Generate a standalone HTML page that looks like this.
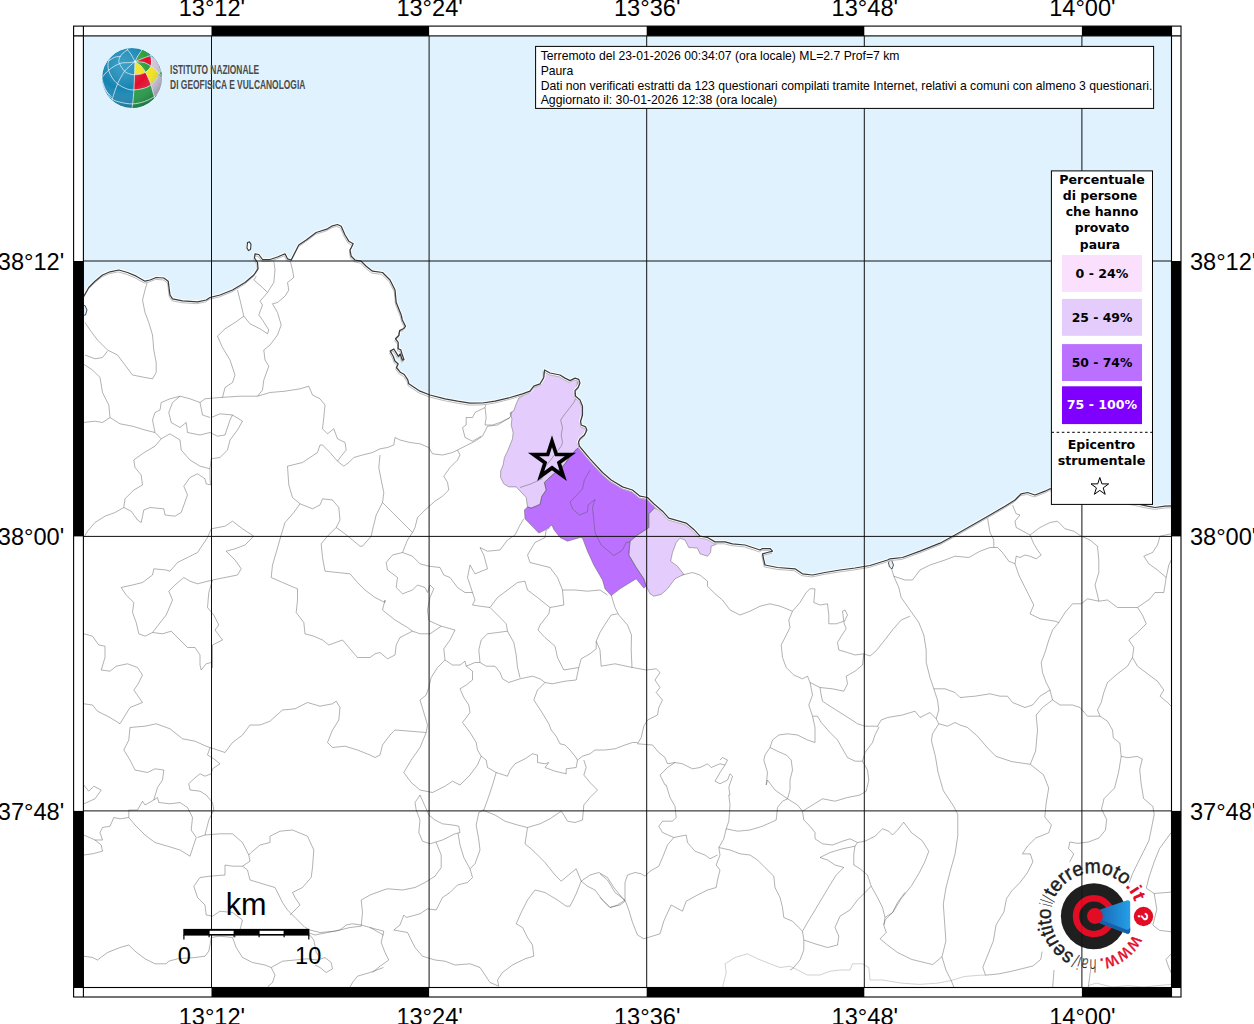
<!DOCTYPE html>
<html lang="it"><head><meta charset="utf-8"><title>Hai sentito il terremoto - Paura</title>
<style>html,body{margin:0;padding:0;background:#fff}svg{display:block}.t{font-family:"Liberation Sans",sans-serif}.d{font-family:"DejaVu Sans","Liberation Sans",sans-serif;font-weight:bold}</style></head><body>
<svg width="1254" height="1024" viewBox="0 0 1254 1024">
<defs><clipPath id="mapclip"><rect x="83.4" y="35.9" width="1088.1" height="951.6"/></clipPath>
<linearGradient id="cone" x1="0" y1="0" x2="1" y2="0"><stop offset="0" stop-color="#0b5fae"/><stop offset="1" stop-color="#1a9be6"/></linearGradient>
<radialGradient id="globeb" cx="0.35" cy="0.3" r="0.8"><stop offset="0" stop-color="#3fb4d6"/><stop offset="0.6" stop-color="#1581ad"/><stop offset="1" stop-color="#0d5f86"/></radialGradient>
</defs>
<rect width="1254" height="1024" fill="#fff"/>
<g clip-path="url(#mapclip)">
<rect x="83.4" y="35.9" width="1088.1" height="951.6" fill="#dff2fd"/>
<path d="M70.0 300.0 L83.8 296.2 L88.8 287.5 L95.0 281.2 L102.5 275.0 L110.0 271.8 L118.8 270.0 L127.5 272.5 L136.2 276.2 L145.0 281.2 L150.0 280.0 L156.2 277.5 L163.8 278.0 L168.2 281.2 L170.0 295.0 L172.5 298.8 L182.5 300.8 L197.5 301.8 L206.2 300.0 L210.0 297.5 L220.0 295.0 L232.5 290.0 L245.0 282.5 L253.8 275.0 L258.0 268.8 L257.5 262.5 L254.5 258.0 L255.0 253.8 L258.8 254.5 L262.5 259.5 L270.0 259.5 L277.5 257.0 L285.0 253.8 L287.5 258.8 L291.2 260.0 L295.0 252.5 L298.8 245.0 L306.2 240.0 L316.2 232.5 L327.5 228.8 L332.5 225.8 L337.5 224.5 L341.2 226.2 L345.0 235.0 L348.8 241.2 L353.2 243.8 L350.0 250.0 L351.2 256.2 L355.0 260.0 L361.2 261.2 L366.2 266.2 L372.5 271.2 L382.5 272.5 L390.0 280.0 L395.0 290.0 L396.2 302.5 L401.2 315.0 L402.3 320.0 L405.5 326.4 L403.7 328.5 L399.6 330.6 L399.0 335.2 L395.5 338.8 L398.2 342.3 L398.2 348.7 L400.8 349.9 L402.0 354.0 L404.0 359.6 L402.3 360.2 L400.2 354.0 L398.4 356.3 L395.5 351.7 L393.8 349.0 L390.2 351.1 L393.2 356.3 L394.9 361.0 L398.2 364.0 L396.4 367.5 L400.2 372.2 L404.3 374.5 L407.8 379.8 L408.8 383.8 L420.0 391.2 L430.0 395.0 L445.0 398.8 L457.5 401.2 L470.0 403.2 L482.5 403.0 L495.0 401.2 L510.0 397.5 L522.5 393.8 L530.0 391.2 L533.8 386.2 L540.0 383.8 L543.8 377.5 L544.5 370.0 L550.0 373.0 L560.0 375.0 L565.0 378.1 L570.0 380.6 L575.0 378.1 L578.8 379.4 L580.0 383.1 L578.1 387.5 L575.0 390.6 L575.6 396.2 L580.0 400.0 L582.5 406.2 L582.5 415.0 L580.6 421.2 L581.2 425.0 L585.6 426.9 L586.9 430.0 L584.4 435.0 L580.0 438.8 L578.5 441.9 L579.4 446.2 L582.5 450.0 L590.0 458.8 L602.5 472.5 L611.2 480.0 L622.5 486.9 L632.5 490.0 L640.0 496.2 L647.5 497.5 L653.8 503.8 L662.5 511.2 L668.8 518.1 L677.5 520.6 L686.2 523.1 L693.8 529.4 L700.0 536.2 L707.5 537.5 L715.0 541.9 L725.0 541.9 L732.5 543.8 L745.0 545.0 L760.0 550.0 L762.5 548.5 L770.0 548.5 L772.5 551.2 L767.5 552.5 L762.5 553.8 L763.8 560.0 L765.0 565.0 L777.5 567.5 L795.0 568.8 L802.5 573.8 L812.5 575.0 L825.0 572.5 L840.0 570.0 L855.0 568.0 L870.0 565.5 L887.5 560.0 L890.0 558.8 L902.5 557.5 L920.0 551.2 L940.0 543.2 L955.0 535.0 L972.5 525.0 L990.0 515.0 L1005.0 506.2 L1015.0 500.0 L1021.2 493.8 L1027.5 492.5 L1035.0 495.0 L1045.0 491.2 L1050.0 488.8 L1080.0 494.0 L1110.0 499.0 L1135.0 503.5 L1147.5 506.2 L1155.0 507.5 L1165.0 506.2 L1185.0 505.0 L1185.0 505.0 L1185.0 1000.0 L70.0 1000.0 L70.0 300.0 Z" fill="#fff"/>
<path d="M543.1 370.6 L546.2 372.5 L552.5 374.4 L560.0 375.0 L565.0 378.1 L570.0 380.6 L575.0 378.1 L578.8 379.4 L580.0 383.1 L578.1 387.5 L575.0 390.6 L575.6 396.2 L580.0 400.0 L582.5 406.2 L582.5 415.0 L580.6 421.2 L581.2 425.0 L585.6 426.9 L586.9 430.0 L584.4 435.0 L580.0 438.8 L578.5 441.9 L579.4 446.2 L578.8 447.5 L575.0 450.6 L568.8 458.1 L565.0 463.8 L560.0 468.8 L553.8 473.8 L547.5 479.4 L544.4 482.5 L546.2 490.0 L541.9 496.2 L540.0 504.4 L531.2 508.1 L527.5 506.9 L526.2 497.5 L516.2 486.9 L508.8 486.9 L503.8 483.8 L500.6 477.5 L500.6 471.2 L503.1 465.0 L504.4 457.5 L507.5 451.2 L510.0 445.0 L512.5 438.8 L513.1 432.5 L511.2 425.0 L511.9 418.8 L510.0 413.1 L513.8 410.6 L516.2 403.8 L518.8 398.1 L523.8 395.0 L530.0 391.9 L533.8 386.9 L538.1 385.6 L541.2 385.0 L542.5 380.0 Z" fill="#e4ccfc"/>
<path d="M578.8 447.5 L582.5 450.0 L590.0 458.8 L602.5 472.5 L611.2 480.0 L622.5 486.9 L632.5 490.0 L640.0 496.2 L647.5 497.5 L653.8 503.8 L654.4 508.1 L648.8 513.8 L648.8 527.5 L637.5 535.0 L630.0 541.2 L628.8 555.0 L636.2 567.5 L643.8 578.8 L646.2 586.2 L643.8 588.1 L636.2 578.8 L620.0 588.8 L611.2 595.6 L605.0 588.8 L602.5 580.0 L593.8 565.0 L587.5 551.2 L582.5 538.1 L580.0 537.5 L567.5 541.2 L560.0 537.5 L553.8 529.4 L551.9 525.0 L545.0 530.0 L538.8 533.1 L525.0 518.8 L524.4 510.0 L527.5 506.9 L531.2 508.1 L540.0 504.4 L541.9 496.2 L546.2 490.0 L544.4 482.5 L547.5 479.4 L553.8 473.8 L560.0 468.8 L565.0 463.8 L568.8 458.1 L575.0 450.6 Z" fill="#bb70ff"/>
<path d="M654.4 508.1 L662.5 511.2 L668.8 518.1 L677.5 520.6 L686.2 523.1 L693.8 529.4 L700.0 536.2 L707.5 537.5 L715.0 541.9 L716.2 544.4 L711.2 546.2 L710.6 552.5 L707.5 556.2 L700.0 553.8 L697.5 548.1 L688.8 547.5 L685.0 540.0 L680.0 538.1 L676.2 542.5 L672.5 552.5 L670.6 561.2 L677.5 566.2 L683.8 574.4 L675.0 578.8 L667.5 588.8 L661.2 594.4 L653.8 596.2 L650.0 593.8 L646.2 586.2 L643.8 578.8 L636.2 567.5 L628.8 555.0 L630.0 541.2 L637.5 535.0 L648.8 527.5 L648.8 513.8 Z" fill="#e4ccfc"/>
<g fill="none" stroke="#555" stroke-opacity="0.5" stroke-width="0.9" stroke-linejoin="round">
<path d="M147.5 281.2 L145.0 290.0 L142.5 300.0 L145.0 312.5 L148.8 322.5 L152.5 335.0 L153.8 350.0 L156.2 362.5 L156.2 372.5 L152.5 378.8 L145.0 377.5 L132.5 375.0 L125.0 365.0 L117.5 355.0 L107.5 350.0 L97.5 340.0 L90.0 330.0 L85.0 322.5"/>
<path d="M107.5 351.2 L102.5 357.5 L95.0 358.8 L85.0 355.0"/>
<path d="M83.0 363.8 L92.5 370.0 L100.0 377.5 L102.5 392.5 L108.8 405.0 L110.0 417.5 L102.5 422.5 L95.0 421.2 L83.0 422.5"/>
<path d="M110.0 417.5 L120.0 423.8 L132.5 426.2 L145.0 430.0 L155.0 432.5 L161.2 438.8 L155.0 446.2 L145.0 452.0 L135.0 459.0"/>
<path d="M155.0 432.5 L152.5 420.0 L155.0 412.5 L160.0 410.0 L161.2 402.5 L170.0 398.8 L180.0 396.2 L190.0 398.8 L200.0 402.5 L202.5 415.0 L210.0 417.5"/>
<path d="M180.0 396.2 L172.5 402.5 L168.8 412.5 L171.2 422.5 L180.0 427.5 L186.2 422.5 L187.5 432.5 L200.0 435.0 L210.0 432.5 L217.5 436.2 L225.0 435.0 L230.0 420.0 L232.5 415.0 L220.0 413.8 L211.2 417.5"/>
<path d="M200.0 402.5 L205.0 398.8 L220.0 397.5 L240.0 396.2 L257.5 396.2 L270.0 392.5 L285.0 391.2 L300.0 388.8 L308.8 386.2"/>
<path d="M237.5 290.0 L240.0 300.0 L243.8 316.2 L235.0 322.5 L225.0 328.8 L217.5 336.2 L222.5 347.5 L230.0 360.0 L235.0 375.0 L232.5 382.5 L225.0 387.5 L222.5 397.5"/>
<path d="M243.8 316.2 L250.0 323.8 L260.0 328.8 L267.5 333.8 L268.8 330.0 L262.5 320.0 L258.8 315.0 L262.5 305.0 L260.0 301.2 L267.5 292.5 L262.5 287.5 L253.8 280.0 L256.2 276.2"/>
<path d="M267.5 292.5 L273.8 282.5 L275.0 270.0 L273.8 261.2"/>
<path d="M290.0 260.0 L292.5 270.0 L293.8 277.5 L287.5 282.5 L288.8 290.0 L285.0 296.2 L277.5 302.5 L272.5 303.8 L277.5 312.5 L281.2 325.0 L277.5 335.0 L270.0 345.0 L263.8 350.0 L265.0 360.0 L268.8 366.2 L263.8 380.0 L262.5 390.0 L257.5 396.2"/>
<path d="M232.5 415.0 L242.5 421.2 L237.5 430.0 L230.0 440.0 L227.5 450.0"/>
<path d="M161.2 438.8 L170.0 433.8 L180.0 440.0 L181.2 450.0"/>
<path d="M308.8 386.2 L312.5 395.0 L320.0 398.8 L325.0 405.0 L323.8 417.5 L322.5 428.8 L327.5 433.8 L333.8 428.8 L337.5 438.8 L345.0 442.5 L346.2 450.0 L341.2 456.2 L337.5 461.2 L343.8 466.2 L348.8 462.5 L353.8 457.5 L362.5 455.0 L372.5 452.5 L380.0 448.8 L387.5 447.5 L393.8 445.0 L395.0 437.5 L400.0 440.0 L410.0 442.5 L420.0 443.8 L428.8 447.5 L432.5 453.8 L442.5 455.0 L452.5 452.5 L457.5 450.0 L465.0 446.2 L475.0 441.2 L482.5 436.2 L487.5 426.2 L497.5 425.0 L510.0 417.5 L512.0 412.0"/>
<path d="M337.5 461.2 L330.0 452.5 L322.5 445.0 L320.0 445.0"/>
<path d="M380.0 455.0 L378.8 467.5 L381.2 480.0 L383.8 492.5 L382.5 502.5 L376.2 515.0 L372.5 530.0 L371.2 536.2 L362.5 546.2 L360.0 546.2"/>
<path d="M382.5 502.5 L392.5 512.5 L402.5 522.5 L412.5 532.5 L415.0 527.5 L417.5 517.5 L425.0 510.0 L435.0 501.2 L442.5 496.2 L448.8 490.0 L447.5 482.5 L443.8 476.2 L450.0 467.5 L457.5 460.0 L460.0 455.0 L457.5 450.0"/>
<path d="M412.5 532.5 L407.5 540.0 L402.5 552.5 L392.5 555.0 L386.2 562.5 L387.5 570.0 L397.5 577.5 L396.2 587.5 L402.5 593.8 L412.5 590.0 L417.5 585.0 L425.0 587.5 L427.5 592.5"/>
<path d="M402.5 552.5 L412.5 556.2 L420.0 563.8 L428.8 566.2 L440.0 567.5 L443.8 575.0 L450.0 577.5 L457.5 587.5 L465.0 592.5 L472.5 592.5 L475.0 600.0 L472.5 605.0 L480.0 606.2 L490.0 607.5 L497.5 597.5 L507.5 590.0 L517.5 582.5 L525.0 581.2 L527.5 590.0 L537.5 597.5 L550.0 607.5 L548.8 613.8 L540.0 625.0 L538.0 630.0"/>
<path d="M557.5 577.5 L562.5 590.0 L563.8 605.0 L550.0 607.5"/>
<path d="M472.5 592.5 L467.5 577.5 L470.0 565.0 L475.0 573.8 L487.5 568.8 L483.8 555.0 L480.0 547.5 L487.5 551.2 L500.0 550.0 L507.5 540.0 L515.0 535.0 L520.0 525.0 L523.8 518.8"/>
<path d="M557.5 577.5 L550.0 567.5 L540.0 565.0 L530.0 562.5 L527.5 555.0 L535.0 542.5 L545.0 537.5 L546.2 530.0 L550.0 527.5"/>
<path d="M562.5 590.0 L575.0 590.0 L587.5 591.2 L600.0 590.0 L607.5 595.0"/>
<path d="M485.0 407.5 L480.0 410.0 L475.0 412.5 L472.5 417.5 L466.2 417.5 L466.2 425.0 L462.5 427.5 L465.0 437.5 L472.5 441.2 L481.2 436.2"/>
<path d="M486.2 403.8 L485.0 407.5 L486.2 417.5 L485.0 425.0 L492.5 425.0 L500.0 422.5 L510.0 417.5"/>
<path d="M490.0 607.5 L500.0 617.5"/>
<path d="M427.5 592.5 L430.0 585.0 L433.8 588.8 L430.0 597.5 L427.5 610.0 L428.8 620.0 L430.0 621.2"/>
<path d="M135.0 459.0 L133.8 460.0 L135.0 467.5 L141.2 475.0 L142.5 485.0 L133.8 490.0 L125.0 498.8 L123.8 507.5 L115.0 512.5 L105.0 516.2 L95.0 522.5 L87.5 531.2 L83.8 537.5"/>
<path d="M123.8 507.5 L131.2 511.2 L137.5 520.0 L141.2 522.5 L143.8 510.0 L150.0 507.5 L163.8 508.8 L165.0 515.0 L175.0 516.2 L181.2 512.5 L187.5 495.0 L183.8 486.2 L190.0 477.5 L197.5 473.8 L205.0 478.8 L206.2 483.8 L210.5 485.0"/>
<path d="M181.2 450.0 L190.0 460.0 L200.0 466.2 L210.0 468.8 L210.0 477.5 L210.5 485.0"/>
<path d="M227.5 450.0 L220.0 457.5 L211.2 458.8 L210.0 468.8"/>
<path d="M211.2 528.8 L225.0 526.2 L232.5 521.2 L242.5 528.8 L253.8 536.2 L245.0 545.0 L235.0 548.8 L226.2 551.2 L235.0 560.0 L241.2 568.8 L237.5 575.0 L225.0 577.5 L212.5 580.0 L197.5 583.8 L190.0 581.2 L183.8 577.5 L175.0 585.0 L168.8 591.2 L172.5 600.0 L166.2 615.0 L152.5 632.5 L145.0 636.2 L138.8 633.8 L136.2 622.5 L132.5 612.5 L133.8 602.5 L126.2 595.0 L121.2 587.5 L132.5 585.0 L142.5 582.5 L152.5 575.0 L153.8 568.8 L166.2 570.0 L170.0 571.2 L177.5 562.5 L187.5 557.5 L197.5 552.5 L202.5 545.0 L207.5 537.5 L211.2 528.8"/>
<path d="M152.5 632.5 L162.5 633.8 L171.2 631.2 L180.0 640.0 L187.5 647.5 L195.0 647.5 L200.0 655.0 L200.0 665.0 L201.2 670.0 L206.2 663.8 L211.2 662.5"/>
<path d="M212.5 580.0 L208.8 592.5 L207.5 607.5 L213.8 615.0 L218.8 625.0 L215.0 630.0 L222.5 640.0 L212.5 645.0 L212.5 660.0 L212.5 668.0"/>
<path d="M83.8 633.8 L92.5 636.2 L98.8 645.0 L105.0 646.2 L105.0 657.5 L101.2 670.0 L110.0 671.2 L116.2 666.2 L127.5 663.8 L137.5 667.5 L142.5 675.0 L137.5 685.0 L133.8 690.0"/>
<path d="M320.0 445.0 L317.5 452.5 L302.5 462.5 L287.5 466.2 L288.8 485.0 L292.5 497.5 L300.0 503.8 L312.5 508.8 L320.0 505.0 L322.5 498.8 L332.5 500.0 L338.8 507.5 L340.0 520.0 L336.2 527.5 L345.0 533.8 L352.5 540.0 L360.0 546.2"/>
<path d="M300.0 503.8 L293.8 512.5 L285.0 522.5 L281.2 535.0 L276.2 552.5 L272.5 565.0 L271.2 577.5 L282.5 582.5 L297.5 588.8 L297.5 600.0 L296.2 612.5 L303.8 622.5 L305.0 633.8 L313.8 636.2 L322.5 640.0 L328.8 645.0 L342.5 640.0 L350.0 648.8 L357.5 657.5 L370.0 657.5 L375.0 653.8"/>
<path d="M336.2 527.5 L327.5 536.2 L321.2 543.8 L322.5 557.5 L325.0 571.2 L337.5 572.5 L350.0 573.8 L357.5 582.5 L365.0 590.0 L375.0 597.5 L385.0 602.5 L385.0 600.0"/>
<path d="M133.8 690.0 L142.5 702.5 L130.0 707.5 L120.0 723.8 L110.0 717.5 L97.5 711.2 L92.5 705.0 L83.8 703.8"/>
<path d="M130.0 727.5 L145.0 726.2 L156.2 723.8 L170.0 728.8 L182.5 738.8 L195.0 741.2 L206.2 746.2 L210.0 747.5 L207.5 755.0 L213.8 758.8 L220.0 763.8 L212.5 768.8 L211.2 773.8 L205.0 776.2 L200.0 773.8 L193.8 778.8 L188.8 783.8 L190.0 790.0 L200.0 791.2 L206.2 795.0 L212.5 802.5 L213.8 810.0"/>
<path d="M130.0 727.5 L128.8 740.0 L123.8 750.0 L130.0 760.0 L135.0 770.0 L147.5 772.5 L155.0 768.8 L163.8 770.0 L162.5 780.0 L157.5 787.5 L153.8 800.0 L157.5 797.5 L158.8 802.5 L170.0 803.8 L180.0 802.5 L187.5 807.5 L192.5 817.5 L191.2 830.0 L196.2 837.5 L190.0 856.2 L180.0 850.0 L167.5 846.2 L155.0 842.5 L145.0 835.0 L135.0 825.0 L128.8 817.5 L128.8 810.0 L137.5 810.0 L142.5 801.2 L145.0 805.0 L153.8 800.0"/>
<path d="M213.8 810.0 L208.8 820.0 L205.0 835.0 L197.5 837.5"/>
<path d="M205.0 835.0 L220.0 833.8 L232.5 833.8 L242.5 842.5 L248.8 855.0 L251.2 852.5 L260.0 845.0 L270.0 842.5 L270.0 836.2 L280.0 831.2 L292.5 830.0 L307.5 836.2 L313.8 850.0 L312.5 867.5 L311.2 877.5 L302.5 887.5 L292.5 892.5 L295.0 897.5 L300.0 905.0 L290.0 915.0"/>
<path d="M248.8 855.0 L250.0 861.2 L242.5 866.2 L232.5 866.2 L225.0 865.0 L225.0 875.0 L210.0 876.2 L200.0 877.5 L193.8 886.2 L197.5 897.5 L205.0 905.0 L206.2 915.0 L212.5 916.2"/>
<path d="M242.5 866.2 L247.5 870.0 L250.0 880.0 L262.5 883.8 L275.0 887.5 L278.8 895.0 L282.5 902.5 L287.5 910.0 L295.0 917.5 L305.0 927.5 L310.0 930.0"/>
<path d="M212.5 916.2 L220.0 911.2 L232.5 912.5 L242.5 920.0 L240.0 930.0 L237.5 932.5 L235.0 937.5"/>
<path d="M210.0 747.5 L225.0 752.5 L232.5 742.5 L242.5 735.0 L250.0 725.0 L260.0 725.0 L270.0 721.2 L282.5 710.0 L295.0 708.8 L307.5 702.5 L320.0 706.2 L332.5 703.8 L336.2 701.2 L340.0 707.5 L338.8 720.0 L332.5 730.0 L327.5 742.5 L332.5 747.5 L345.0 746.2 L357.5 750.0 L370.0 755.0 L375.0 757.5"/>
<path d="M83.8 785.0 L88.8 791.2 L93.8 786.2 L101.2 790.0 L95.0 798.8 L83.8 803.8"/>
<path d="M128.8 817.5 L120.0 818.8 L113.8 817.5 L110.0 826.2 L102.5 827.5 L100.0 832.5 L102.5 840.0 L95.0 840.0 L83.8 835.0"/>
<path d="M95.0 840.0 L101.2 845.0 L102.5 851.2 L92.5 853.8 L83.8 855.0"/>
<path d="M383.5 890.0 L370.0 895.0 L361.2 900.0 L362.5 912.5 L361.2 926.2 L350.0 927.5 L335.0 931.2 L320.0 932.5 L310.0 930.0"/>
<path d="M83.8 956.2 L92.5 957.5 L97.5 960.0 L107.5 952.5 L120.0 947.5 L128.8 945.0 L135.0 951.2 L145.0 958.8 L155.0 963.8 L166.2 963.8 L168.8 961.2 L177.5 958.8 L195.0 957.5 L205.0 956.2 L208.8 951.2 L210.0 945.0 L211.2 937.5 L220.0 936.2 L232.5 937.5 L236.2 947.5 L242.5 957.5 L252.5 962.5 L265.0 965.0 L271.2 967.5 L282.5 961.2 L295.0 960.0 L307.5 958.8 L317.5 960.0 L325.0 957.5 L331.2 962.5 L332.5 968.8 L326.2 972.5 L320.0 967.5 L315.0 965.0"/>
<path d="M271.2 967.5 L275.0 975.0 L272.5 982.5 L267.5 987.0"/>
<path d="M307.5 932.5 L315.0 935.0 L327.5 932.5 L340.0 930.0 L346.2 925.0 L352.5 923.8 L361.2 925.0 L370.0 927.5 L383.5 935.0"/>
<path d="M307.5 932.5 L313.8 940.0 L316.2 952.5 L320.0 957.5"/>
<path d="M383.5 967.5 L370.0 972.5 L357.5 976.2 L352.5 982.5 L350.0 987.0"/>
<path d="M385.0 600.0 L382.5 610.0 L395.0 620.0 L407.5 627.5 L412.5 631.2 L420.0 633.8 L430.0 633.8 L441.2 626.2 L430.0 621.2"/>
<path d="M412.5 631.2 L400.0 637.5 L396.2 645.0 L395.0 655.0 L387.5 658.8 L380.0 652.5 L375.0 653.8"/>
<path d="M441.2 626.2 L455.0 630.0 L450.0 640.0 L443.8 648.8 L445.0 660.0 L437.5 667.5 L431.2 677.5 L428.8 687.5 L426.2 695.0 L420.0 700.0 L423.8 712.5 L427.5 725.0 L426.2 732.5 L420.0 747.5 L411.2 760.0 L403.8 772.5 L411.2 782.5 L420.0 790.0 L432.5 792.5 L445.0 786.2 L452.5 781.2 L460.0 785.0 L470.0 775.0 L477.5 765.0 L481.2 756.2"/>
<path d="M426.2 732.5 L410.0 731.2 L395.0 730.0 L390.0 735.0 L382.5 745.0 L380.0 755.0 L375.0 757.5"/>
<path d="M445.0 660.0 L452.5 665.0 L460.0 665.0 L465.0 661.2 L466.2 666.2 L472.5 671.2 L472.5 680.0 L466.2 685.0 L460.0 688.8 L463.8 697.5 L468.8 705.0 L470.0 712.5 L462.5 722.5 L470.0 732.5 L476.2 742.5 L477.5 750.0 L481.2 756.2 L486.2 760.0 L487.5 767.5 L496.2 772.5 L507.5 776.2 L510.0 770.0 L515.0 763.8 L525.0 758.8 L532.5 753.8 L537.5 755.0 L537.5 762.5 L545.0 763.8 L548.8 762.5 L545.0 767.5 L555.0 771.2 L566.2 773.8 L566.2 768.8 L576.2 767.5 L577.5 760.0"/>
<path d="M466.2 666.2 L475.0 662.5 L480.0 662.5 L486.2 666.2 L495.0 666.2 L500.0 672.5 L502.5 678.8 L508.8 682.5 L520.0 678.8 L532.5 676.2 L540.0 678.8 L545.0 682.5 L552.5 683.8 L565.0 681.2 L576.2 680.0 L578.8 667.5 L581.2 658.8 L590.0 653.8 L596.2 648.8 L596.2 641.2 L600.0 632.5 L606.2 622.5 L611.2 615.0 L617.5 613.8"/>
<path d="M480.0 662.5 L478.8 650.0 L481.2 640.0 L487.5 633.8 L497.5 632.5 L507.5 631.2 L506.2 623.8 L500.0 617.5"/>
<path d="M507.5 631.2 L513.8 642.5 L516.2 655.0 L517.5 667.5 L520.0 677.5"/>
<path d="M538.0 630.0 L545.0 637.5 L555.0 646.2 L557.5 657.5 L563.8 670.0 L578.8 667.5"/>
<path d="M596.2 641.2 L600.0 650.0 L601.2 666.2 L615.0 663.8 L632.5 667.5"/>
<path d="M545.0 682.5 L537.5 690.0 L533.8 700.0 L541.2 711.2 L548.8 723.8 L551.2 730.0 L556.2 736.2 L560.0 743.8 L565.0 745.0 L570.0 750.0 L575.0 756.2 L577.5 760.0 L582.5 756.2 L590.0 753.8 L595.0 750.0 L605.0 750.0 L615.0 748.8 L625.0 745.0 L632.5 742.5 L637.5 742.5"/>
<path d="M583.8 760.0 L586.2 767.5 L583.8 775.0 L590.0 782.5 L597.5 790.0 L590.0 797.5 L583.8 805.0 L582.5 820.0 L575.0 822.5 L567.5 821.2 L563.8 815.0 L561.2 811.2 L550.0 818.8 L540.0 823.8 L527.5 827.5 L517.5 825.0 L505.0 821.2 L495.0 815.0 L482.5 810.0"/>
<path d="M496.2 772.5 L492.5 785.0 L487.5 800.0 L483.8 810.0 L478.8 812.5 L476.2 825.0 L478.8 840.0 L480.0 850.0 L475.0 863.8 L470.0 868.8"/>
<path d="M420.0 795.0 L415.0 802.5 L416.2 810.0 L420.0 820.0 L418.8 832.5 L422.5 841.2 L430.0 843.8 L442.5 840.0 L455.0 833.8 L460.0 832.5 L458.8 826.2 L452.5 825.0 L442.5 823.8 L435.0 820.0 L428.8 815.0 L426.2 808.8 L420.0 795.0"/>
<path d="M436.0 842.0 L441.2 855.0 L441.2 867.5 L435.0 876.2 L425.0 882.5 L415.0 887.5 L402.5 890.0 L387.5 888.8 L383.5 890.0"/>
<path d="M458.0 833.0 L460.0 845.0 L463.8 857.5 L470.0 868.8 L472.5 877.5 L467.5 882.5 L457.5 885.0 L450.0 892.5 L442.5 897.5 L436.2 910.0 L427.5 908.8 L420.0 913.8 L406.2 917.5 L403.8 915.0 L400.0 925.0 L393.8 930.0 L407.5 932.5 L415.0 947.5 L422.5 956.2 L435.0 960.0 L445.0 961.2 L455.0 965.0 L470.0 963.8 L480.0 967.5 L485.0 975.0 L490.0 982.5 L498.8 986.2"/>
<path d="M527.5 827.5 L525.0 843.8 L532.5 850.0 L545.0 862.5 L555.0 875.0 L561.2 881.2 L570.0 873.8 L576.2 868.8 L581.2 881.2 L587.5 886.2 L595.0 890.0 L602.5 900.0 L610.0 907.5 L620.0 905.0 L625.0 901.2"/>
<path d="M581.2 881.2 L590.0 875.0 L598.8 872.5 L607.5 877.5 L613.8 887.5 L625.0 901.2"/>
<path d="M581.2 881.2 L576.2 893.8 L570.0 906.2 L566.2 906.2 L557.5 900.0 L545.0 892.5 L535.0 890.0 L527.5 900.0 L521.2 912.5 L516.2 923.8 L522.5 927.5 L527.5 937.5 L532.5 945.0 L533.8 956.2 L525.0 958.8 L512.5 965.0 L502.5 972.5 L497.5 980.0 L498.8 986.2"/>
<path d="M370.0 927.5 L383.8 931.2 L381.2 942.5 L385.0 952.5 L388.8 960.0 L380.0 966.2 L372.5 972.5"/>
<path d="M611.2 595.0 L615.0 607.5 L618.8 615.0 L627.5 625.0 L631.5 635.0 L631.2 650.0 L632.0 668.0"/>
<path d="M632.5 667.5 L646.2 670.0 L656.2 668.8 L660.0 672.5 L655.0 680.0 L660.0 687.5 L656.2 692.5 L662.5 700.0 L658.8 707.5 L657.5 715.0 L647.5 720.0 L643.8 726.2 L641.2 737.5 L637.5 743.8 L652.5 745.0 L658.8 752.5 L665.0 757.5 L667.5 763.8 L675.0 762.5 L682.5 763.8 L692.5 768.8 L700.0 767.5 L707.5 763.8 L711.2 767.5 L720.0 763.8 L725.0 765.0 L727.5 760.0 L722.5 757.5 L720.0 760.0"/>
<path d="M725.0 765.0 L720.0 772.5 L715.0 781.2 L720.0 783.8 L727.5 780.0 L730.0 773.8 L732.5 776.2 L728.8 787.5 L730.0 795.0 L728.8 795.0"/>
<path d="M675.0 762.5 L667.5 767.5 L660.0 775.0 L665.0 785.0 L666.2 785.0"/>
<path d="M682.5 575.0 L692.5 572.5 L700.0 575.0 L707.5 581.2 L707.5 586.2 L715.0 593.8 L722.5 600.0 L730.0 610.0 L740.0 615.0 L750.0 611.2 L760.0 606.2 L770.0 603.8 L780.0 606.2 L792.5 611.2"/>
<path d="M792.5 611.2 L800.0 602.5 L806.2 592.5 L810.0 588.8 L815.0 588.8 L813.8 602.5 L820.0 605.0 L827.5 603.8 L828.8 615.0 L828.8 623.8 L836.2 623.8 L843.8 621.2 L842.5 611.2 L845.0 610.0 L847.5 615.0 L843.8 622.5 L846.2 628.8 L841.2 636.2 L837.5 642.5 L838.8 650.0 L847.5 652.5 L855.0 655.0 L863.8 653.8"/>
<path d="M792.5 611.2 L788.8 620.0 L790.0 627.5 L785.0 637.5 L781.2 645.0 L782.5 657.5 L786.2 667.5 L793.8 675.0 L802.5 678.8 L807.5 676.2 L810.0 682.5 L820.0 687.5 L832.5 688.8 L843.8 691.2 L847.5 683.8 L846.2 676.2 L855.0 671.2 L862.5 665.0 L863.8 653.8"/>
<path d="M810.0 682.5 L812.5 695.0 L808.8 705.0 L812.5 716.2 L815.0 727.5 L815.0 742.5 L807.5 740.0 L797.5 735.0 L787.5 733.8 L778.8 735.0 L772.5 740.0 L770.0 747.5 L765.0 755.0 L763.8 760.0 L767.5 772.5 L766.2 785.0 L767.5 780.0"/>
<path d="M770.0 747.5 L777.5 751.2 L786.2 755.0 L791.2 760.0 L792.5 770.0 L790.0 780.0 L790.0 790.0"/>
<path d="M820.0 687.5 L821.2 695.0 L822.5 701.2 L830.0 706.2 L840.0 712.5 L850.0 718.8 L857.5 723.8 L865.0 726.2 L877.5 726.2 L881.2 720.0 L887.5 717.5 L902.5 715.0 L915.0 711.2 L920.0 717.5 L930.0 712.5 L936.2 718.8"/>
<path d="M812.5 716.2 L817.5 716.2 L821.2 722.5 L830.0 732.5 L837.5 740.0 L842.5 748.8 L847.5 757.5 L855.0 761.2 L862.5 761.2 L865.0 752.5 L872.5 742.5 L875.0 735.0 L878.8 727.5 L877.5 726.2"/>
<path d="M862.5 761.2 L867.5 770.0 L868.8 780.0 L866.2 791.2"/>
<path d="M863.8 653.8 L870.0 656.0 L876.0 651.0 L884.0 641.0 L892.5 630.0 L901.2 620.0 L910.0 616.2"/>
<path d="M666.2 785.0 L670.0 797.5 L675.0 806.2 L676.2 817.5 L672.5 821.2 L662.5 821.2 L658.8 826.2 L662.5 832.5 L673.8 837.5 L667.5 845.0 L662.5 857.5 L658.8 866.2 L650.0 871.2 L645.0 876.2 L641.2 873.8 L635.0 872.5 L627.5 875.0 L625.0 882.5 L625.0 900.0 L628.8 910.0 L632.5 922.5 L637.5 935.0 L643.8 938.8 L660.0 933.8 L663.8 921.2 L668.8 910.0 L671.2 905.0 L682.5 911.2 L686.2 901.2 L697.5 895.0 L707.5 890.0 L716.2 887.5 L717.5 880.0 L720.0 870.0 L716.2 865.0 L720.0 855.0 L718.8 847.5 L723.8 838.8 L726.2 828.8 L728.8 821.2 L730.0 805.0 L728.8 795.0"/>
<path d="M673.8 837.5 L686.2 835.0 L687.5 842.5 L695.0 851.2 L705.0 855.0 L710.0 858.8 L717.5 855.0"/>
<path d="M600.0 873.8 L607.5 880.0 L615.0 892.5 L625.0 900.0 L617.5 905.0 L610.0 907.5 L600.0 897.5"/>
<path d="M726.2 828.8 L737.5 831.2 L750.0 830.0 L762.5 826.2 L776.2 820.0 L777.5 807.5 L782.5 801.2 L787.5 798.8 L775.0 790.0 L767.5 780.0"/>
<path d="M790.0 790.0 L787.5 798.8 L797.5 805.0 L802.5 811.2 L812.5 805.0 L822.5 798.8 L835.0 801.2 L847.5 797.5 L860.0 795.0 L866.2 791.2"/>
<path d="M802.5 811.2 L803.8 820.0 L810.0 826.2 L815.0 832.5 L815.0 838.8 L822.5 843.8 L832.5 845.0 L842.5 841.2 L850.0 838.8 L857.5 842.5 L865.0 841.2 L875.0 836.2 L882.5 828.8 L888.8 831.2 L892.5 835.0 L897.5 830.0 L903.7 822.3 L911.6 832.8 L922.2 840.7 L928.8 851.3 L924.8 861.8 L919.5 872.4 L911.6 885.6 L901.1 898.7 L893.2 911.9 L885.3 919.8 L883.8 925.0"/>
<path d="M718.8 847.5 L730.0 850.0 L740.0 853.8 L750.0 855.0 L757.5 860.0 L765.0 867.5 L773.8 876.2 L775.0 887.5 L780.0 897.5 L782.5 907.5 L783.8 917.5 L792.5 921.2 L798.8 927.5 L802.5 931.2 L807.5 922.5 L815.0 910.0 L822.5 897.5 L830.0 885.0 L836.2 875.0 L843.8 867.5 L835.0 865.0 L827.5 860.0 L820.0 857.5 L830.0 852.5 L842.5 848.8 L855.0 846.2 L857.5 842.5"/>
<path d="M802.5 931.2 L803.8 940.0 L803.8 950.0 L800.0 960.0 L792.5 968.8 L790.0 970.0"/>
<path d="M803.8 940.0 L815.0 943.8 L827.5 947.5 L837.5 945.0 L838.8 936.2 L835.0 927.5 L840.0 916.2 L850.0 910.0 L857.5 900.0 L865.0 892.5 L871.2 886.2 L867.5 875.0 L860.0 868.8 L853.8 865.0 L853.8 853.8 L855.0 846.2"/>
<path d="M871.2 886.2 L877.5 897.5 L882.5 907.5 L885.0 917.5 L883.8 925.0 L886.2 932.5 L880.0 938.8 L887.5 945.0 L897.5 952.5 L911.6 959.4 L922.2 962.0 L932.7 964.6 L942.0 956.7"/>
<path d="M885.0 917.5 L892.5 912.5 L897.5 902.5 L905.0 892.5"/>
<path d="M891.2 567.5 L893.8 576.2 L898.8 587.5 L901.2 597.5 L910.0 610.0 L918.8 622.5 L923.8 635.0 L926.2 650.0 L926.2 662.5 L930.0 677.5 L933.8 688.8 L937.5 700.0 L938.8 710.0 L936.2 718.8 L938.8 723.8 L932.5 733.8 L931.4 740.5 L935.4 756.4 L938.0 772.2 L943.3 790.6 L953.8 806.5 L957.8 814.4 L957.8 835.5 L955.1 853.9 L949.9 872.4 L945.9 888.2 L943.3 904.0 L944.6 922.5 L945.9 940.9 L942.0 956.7 L945.9 969.9 L951.2 980.5 L953.8 987.0"/>
<path d="M893.8 576.2 L905.0 580.0 L912.5 580.0 L920.0 570.0 L930.0 565.0 L945.0 560.0 L955.0 556.2 L968.8 557.5 L980.0 551.2 L990.0 547.5 L997.5 547.5 L1002.5 552.5 L1008.8 561.2 L1015.0 563.8 L1016.2 556.2 L1020.0 557.5 L1025.0 555.0 L1030.0 556.2 L1036.2 558.8 L1041.2 555.0 L1037.5 550.0 L1033.8 543.8 L1030.0 535.0 L1040.0 527.5 L1050.0 522.5 L1057.5 521.2 L1065.0 528.8 L1073.8 531.2 L1081.2 536.2 L1090.0 540.0 L1097.5 546.2 L1098.8 560.0 L1098.8 572.5 L1095.0 585.0 L1097.5 595.0 L1098.8 601.2"/>
<path d="M1012.5 505.0 L1016.2 513.8 L1020.0 515.0 L1015.0 521.2 L1016.2 527.5 L1030.0 535.0"/>
<path d="M987.5 518.0 L990.0 532.5 L993.8 540.0 L993.8 547.5"/>
<path d="M1015.0 563.8 L1018.8 575.0 L1025.0 587.5 L1030.0 597.5 L1033.8 605.0 L1030.0 613.8 L1040.0 618.8 L1055.0 621.2 L1058.8 622.5 L1065.0 612.5 L1072.5 603.8 L1081.2 603.8 L1087.5 598.8 L1098.8 601.2 L1107.5 600.0 L1117.5 607.5 L1130.0 607.5 L1137.5 607.5 L1142.5 615.0 L1146.2 623.8 L1137.5 632.5 L1128.8 640.0 L1133.8 647.5 L1132.5 657.5 L1127.5 666.2 L1117.5 673.8 L1107.5 682.5 L1103.8 692.5 L1101.2 702.5 L1097.5 710.0 L1100.0 716.2 L1107.5 721.2 L1112.5 730.0 L1113.3 737.9 L1119.9 743.2 L1121.2 756.4 L1127.8 757.7 L1137.1 756.4 L1142.3 759.0 L1139.7 769.5 L1141.0 782.7 L1143.6 798.5 L1152.9 806.5 L1154.2 814.4 L1151.6 827.6 L1148.9 840.7 L1143.6 851.3 L1138.4 861.8 L1133.1 872.4 L1129.1 882.9"/>
<path d="M1058.8 622.5 L1052.5 630.0 L1048.8 640.0 L1045.0 652.5 L1041.2 662.5 L1042.5 672.5 L1046.2 682.5 L1050.0 690.0 L1052.5 700.0 L1060.0 705.0 L1072.5 705.0 L1080.0 707.5 L1087.5 716.2 L1100.0 716.2"/>
<path d="M933.8 688.8 L945.0 688.8 L955.0 692.5 L960.0 697.5 L975.0 696.2 L990.0 693.8 L1000.0 696.2 L1007.5 696.2 L1012.5 702.5 L1025.0 707.5 L1032.5 705.0 L1040.0 696.2 L1050.0 690.0"/>
<path d="M1052.5 700.0 L1042.5 707.5 L1036.2 715.0 L1037.5 730.0 L1036.2 745.0 L1035.6 751.1 L1030.3 764.3"/>
<path d="M938.8 723.8 L947.5 726.2 L955.0 722.5 L960.0 725.0 L967.5 727.5 L977.5 736.2 L988.1 748.5 L996.0 756.4 L1011.8 761.6 L1030.3 764.3 L1043.5 774.8 L1048.7 788.0 L1046.1 803.8 L1044.8 817.0 L1051.4 824.9 L1048.7 832.8 L1035.6 838.1 L1027.6 846.0 L1022.4 853.9 L1030.3 853.9 L1032.9 861.8 L1027.6 872.4 L1019.7 882.9 L1011.8 890.8 L1006.5 898.7 L1003.9 911.9 L996.0 925.1 L993.4 940.9 L988.1 954.1 L982.8 967.3 L985.5 975.2 L998.6 973.9 L1011.8 971.2 L1022.4 968.6 L1032.9 966.0 L1040.8 959.4 L1042.1 951.5"/>
<path d="M1171.2 533.8 L1160.0 536.2 L1157.5 545.0 L1152.5 552.5 L1143.8 556.2 L1148.8 563.8 L1157.5 570.0 L1166.2 577.5 L1163.8 592.5 L1155.0 592.5 L1150.0 598.8 L1137.5 607.5"/>
<path d="M1166.2 577.5 L1168.8 565.0 L1171.2 560.0"/>
<path d="M1132.5 657.5 L1137.5 666.2 L1147.5 673.8 L1157.5 681.2 L1163.8 690.0 L1160.0 696.2 L1167.5 702.5 L1171.2 706.2"/>
<path d="M1121.2 756.4 L1118.6 772.2 L1114.6 788.0 L1104.1 798.5 L1101.5 809.1 L1106.7 819.6 L1105.4 830.2 L1098.8 838.1 L1088.3 842.0 L1077.7 843.4 L1069.8 842.0 L1068.5 848.6 L1073.8 853.9 L1069.8 861.8"/>
<path d="M1171.0 832.8 L1159.5 848.6 L1154.2 861.8 L1148.9 877.6 L1146.3 888.2 L1154.2 893.5 L1171.0 892.1"/>
<path d="M1154.2 893.5 L1156.8 909.3 L1152.9 925.1 L1159.5 930.4 L1171.0 931.7"/>
<path d="M1171.0 954.1 L1166.0 959.4 L1168.7 967.3 L1171.0 972.6"/>
<path d="M1054.0 970.0 L1052.7 987.0"/>
<path d="M1091.0 967.0 L1088.3 987.0"/>
<path d="M577.5 381.2 L576.9 387.5 L575.0 393.8 L576.2 397.5 L573.8 402.5 L570.0 407.5 L565.0 413.8 L560.6 420.0 L562.5 427.5 L561.2 435.0 L562.5 442.5 L561.2 446.2 L543.8 468.8 L541.9 478.8 L531.2 483.8 L520.0 487.5"/>
<path d="M590.0 470.0 L584.4 480.0 L582.5 488.8 L575.0 496.9 L570.0 501.9 L572.5 508.8 L579.4 515.0 L587.5 511.9 L588.1 505.0 L595.0 499.4 L592.5 507.5 L593.8 520.0 L595.0 532.5 L601.2 545.0 L613.8 555.6 L622.5 550.0 L626.2 542.5 L630.0 541.9"/>
<path d="M543.1 370.6 L546.2 372.5 L552.5 374.4 L560.0 375.0 L565.0 378.1 L570.0 380.6 L575.0 378.1 L578.8 379.4 L580.0 383.1 L578.1 387.5 L575.0 390.6 L575.6 396.2 L580.0 400.0 L582.5 406.2 L582.5 415.0 L580.6 421.2 L581.2 425.0 L585.6 426.9 L586.9 430.0 L584.4 435.0 L580.0 438.8 L578.5 441.9 L579.4 446.2 L578.8 447.5 L575.0 450.6 L568.8 458.1 L565.0 463.8 L560.0 468.8 L553.8 473.8 L547.5 479.4 L544.4 482.5 L546.2 490.0 L541.9 496.2 L540.0 504.4 L531.2 508.1 L527.5 506.9 L526.2 497.5 L516.2 486.9 L508.8 486.9 L503.8 483.8 L500.6 477.5 L500.6 471.2 L503.1 465.0 L504.4 457.5 L507.5 451.2 L510.0 445.0 L512.5 438.8 L513.1 432.5 L511.2 425.0 L511.9 418.8 L510.0 413.1 L513.8 410.6 L516.2 403.8 L518.8 398.1 L523.8 395.0 L530.0 391.9 L533.8 386.9 L538.1 385.6 L541.2 385.0 L542.5 380.0 Z"/>
<path d="M578.8 447.5 L582.5 450.0 L590.0 458.8 L602.5 472.5 L611.2 480.0 L622.5 486.9 L632.5 490.0 L640.0 496.2 L647.5 497.5 L653.8 503.8 L654.4 508.1 L648.8 513.8 L648.8 527.5 L637.5 535.0 L630.0 541.2 L628.8 555.0 L636.2 567.5 L643.8 578.8 L646.2 586.2 L643.8 588.1 L636.2 578.8 L620.0 588.8 L611.2 595.6 L605.0 588.8 L602.5 580.0 L593.8 565.0 L587.5 551.2 L582.5 538.1 L580.0 537.5 L567.5 541.2 L560.0 537.5 L553.8 529.4 L551.9 525.0 L545.0 530.0 L538.8 533.1 L525.0 518.8 L524.4 510.0 L527.5 506.9 L531.2 508.1 L540.0 504.4 L541.9 496.2 L546.2 490.0 L544.4 482.5 L547.5 479.4 L553.8 473.8 L560.0 468.8 L565.0 463.8 L568.8 458.1 L575.0 450.6 Z"/>
<path d="M654.4 508.1 L662.5 511.2 L668.8 518.1 L677.5 520.6 L686.2 523.1 L693.8 529.4 L700.0 536.2 L707.5 537.5 L715.0 541.9 L716.2 544.4 L711.2 546.2 L710.6 552.5 L707.5 556.2 L700.0 553.8 L697.5 548.1 L688.8 547.5 L685.0 540.0 L680.0 538.1 L676.2 542.5 L672.5 552.5 L670.6 561.2 L677.5 566.2 L683.8 574.4 L675.0 578.8 L667.5 588.8 L661.2 594.4 L653.8 596.2 L650.0 593.8 L646.2 586.2 L643.8 578.8 L636.2 567.5 L628.8 555.0 L630.0 541.2 L637.5 535.0 L648.8 527.5 L648.8 513.8 Z"/>
</g>
<g fill="none" stroke="#555" stroke-opacity="0.3" stroke-width="0.9" stroke-linejoin="round">
<path d="M722.5 987.5 L726.2 972.5 L725.0 963.8 L735.0 957.5 L747.5 953.8 L757.5 958.8 L770.0 963.8 L780.0 967.5 L790.0 966.2 L800.0 971.2 L807.5 975.0 L820.0 975.0 L830.0 971.2 L840.0 970.0 L850.0 970.0 L852.5 963.8 L862.5 963.8 L868.8 967.5 L870.0 980.0 L882.5 980.0 L901.1 983.1 L919.5 984.4 L938.0 983.1 L951.2 980.5 L964.4 976.5 L980.2 975.2 L985.5 975.2"/>
<path d="M1171.0 984.4 L1156.8 985.7 L1143.6 987.0 L1127.8 985.7 L1112.0 987.0 L1096.2 983.1 L1088.3 985.7"/>
</g>
<path d="M247.5 242.5 L249.5 242.0 L251.0 244.5 L250.5 249.5 L248.5 250.5 L247.0 248.0 Z" fill="#fff" stroke="#3a3d40" stroke-width="1.1"/>
<path d="M80.0 305.0 L85.0 305.5 L87.0 310.0 L85.5 315.0 L80.0 316.0 Z" fill="#dff2fd" stroke="#444" stroke-width="0.9"/>
<path d="M889.5 559.0 L891.5 560.0 L893.5 565.0 L892.0 569.0 L889.5 567.0 L888.5 563.0 Z" fill="#dff2fd" stroke="#444" stroke-width="0.9"/>
<path d="M70.0 300.0 L83.8 296.2 L88.8 287.5 L95.0 281.2 L102.5 275.0 L110.0 271.8 L118.8 270.0 L127.5 272.5 L136.2 276.2 L145.0 281.2 L150.0 280.0 L156.2 277.5 L163.8 278.0 L168.2 281.2 L170.0 295.0 L172.5 298.8 L182.5 300.8 L197.5 301.8 L206.2 300.0 L210.0 297.5 L220.0 295.0 L232.5 290.0 L245.0 282.5 L253.8 275.0 L258.0 268.8 L257.5 262.5 L254.5 258.0 L255.0 253.8 L258.8 254.5 L262.5 259.5 L270.0 259.5 L277.5 257.0 L285.0 253.8 L287.5 258.8 L291.2 260.0 L295.0 252.5 L298.8 245.0 L306.2 240.0 L316.2 232.5 L327.5 228.8 L332.5 225.8 L337.5 224.5 L341.2 226.2 L345.0 235.0 L348.8 241.2 L353.2 243.8 L350.0 250.0 L351.2 256.2 L355.0 260.0 L361.2 261.2 L366.2 266.2 L372.5 271.2 L382.5 272.5 L390.0 280.0 L395.0 290.0 L396.2 302.5 L401.2 315.0 L402.3 320.0 L405.5 326.4 L403.7 328.5 L399.6 330.6 L399.0 335.2 L395.5 338.8 L398.2 342.3 L398.2 348.7 L400.8 349.9 L402.0 354.0 L404.0 359.6 L402.3 360.2 L400.2 354.0 L398.4 356.3 L395.5 351.7 L393.8 349.0 L390.2 351.1 L393.2 356.3 L394.9 361.0 L398.2 364.0 L396.4 367.5 L400.2 372.2 L404.3 374.5 L407.8 379.8 L408.8 383.8 L420.0 391.2 L430.0 395.0 L445.0 398.8 L457.5 401.2 L470.0 403.2 L482.5 403.0 L495.0 401.2 L510.0 397.5 L522.5 393.8 L530.0 391.2 L533.8 386.2 L540.0 383.8 L543.8 377.5 L544.5 370.0 L550.0 373.0 L560.0 375.0 L565.0 378.1 L570.0 380.6 L575.0 378.1 L578.8 379.4 L580.0 383.1 L578.1 387.5 L575.0 390.6 L575.6 396.2 L580.0 400.0 L582.5 406.2 L582.5 415.0 L580.6 421.2 L581.2 425.0 L585.6 426.9 L586.9 430.0 L584.4 435.0 L580.0 438.8 L578.5 441.9 L579.4 446.2 L582.5 450.0 L590.0 458.8 L602.5 472.5 L611.2 480.0 L622.5 486.9 L632.5 490.0 L640.0 496.2 L647.5 497.5 L653.8 503.8 L662.5 511.2 L668.8 518.1 L677.5 520.6 L686.2 523.1 L693.8 529.4 L700.0 536.2 L707.5 537.5 L715.0 541.9 L725.0 541.9 L732.5 543.8 L745.0 545.0 L760.0 550.0 L762.5 548.5 L770.0 548.5 L772.5 551.2 L767.5 552.5 L762.5 553.8 L763.8 560.0 L765.0 565.0 L777.5 567.5 L795.0 568.8 L802.5 573.8 L812.5 575.0 L825.0 572.5 L840.0 570.0 L855.0 568.0 L870.0 565.5 L887.5 560.0 L890.0 558.8 L902.5 557.5 L920.0 551.2 L940.0 543.2 L955.0 535.0 L972.5 525.0 L990.0 515.0 L1005.0 506.2 L1015.0 500.0 L1021.2 493.8 L1027.5 492.5 L1035.0 495.0 L1045.0 491.2 L1050.0 488.8 L1080.0 494.0 L1110.0 499.0 L1135.0 503.5 L1147.5 506.2 L1155.0 507.5 L1165.0 506.2 L1185.0 505.0" fill="none" stroke="#fff" stroke-width="3.2" stroke-linejoin="round"/>
<path d="M70.0 300.0 L83.8 296.2 L88.8 287.5 L95.0 281.2 L102.5 275.0 L110.0 271.8 L118.8 270.0 L127.5 272.5 L136.2 276.2 L145.0 281.2 L150.0 280.0 L156.2 277.5 L163.8 278.0 L168.2 281.2 L170.0 295.0 L172.5 298.8 L182.5 300.8 L197.5 301.8 L206.2 300.0 L210.0 297.5 L220.0 295.0 L232.5 290.0 L245.0 282.5 L253.8 275.0 L258.0 268.8 L257.5 262.5 L254.5 258.0 L255.0 253.8 L258.8 254.5 L262.5 259.5 L270.0 259.5 L277.5 257.0 L285.0 253.8 L287.5 258.8 L291.2 260.0 L295.0 252.5 L298.8 245.0 L306.2 240.0 L316.2 232.5 L327.5 228.8 L332.5 225.8 L337.5 224.5 L341.2 226.2 L345.0 235.0 L348.8 241.2 L353.2 243.8 L350.0 250.0 L351.2 256.2 L355.0 260.0 L361.2 261.2 L366.2 266.2 L372.5 271.2 L382.5 272.5 L390.0 280.0 L395.0 290.0 L396.2 302.5 L401.2 315.0 L402.3 320.0 L405.5 326.4 L403.7 328.5 L399.6 330.6 L399.0 335.2 L395.5 338.8 L398.2 342.3 L398.2 348.7 L400.8 349.9 L402.0 354.0 L404.0 359.6 L402.3 360.2 L400.2 354.0 L398.4 356.3 L395.5 351.7 L393.8 349.0 L390.2 351.1 L393.2 356.3 L394.9 361.0 L398.2 364.0 L396.4 367.5 L400.2 372.2 L404.3 374.5 L407.8 379.8 L408.8 383.8 L420.0 391.2 L430.0 395.0 L445.0 398.8 L457.5 401.2 L470.0 403.2 L482.5 403.0 L495.0 401.2 L510.0 397.5 L522.5 393.8 L530.0 391.2 L533.8 386.2 L540.0 383.8 L543.8 377.5 L544.5 370.0 L550.0 373.0 L560.0 375.0 L565.0 378.1 L570.0 380.6 L575.0 378.1 L578.8 379.4 L580.0 383.1 L578.1 387.5 L575.0 390.6 L575.6 396.2 L580.0 400.0 L582.5 406.2 L582.5 415.0 L580.6 421.2 L581.2 425.0 L585.6 426.9 L586.9 430.0 L584.4 435.0 L580.0 438.8 L578.5 441.9 L579.4 446.2 L582.5 450.0 L590.0 458.8 L602.5 472.5 L611.2 480.0 L622.5 486.9 L632.5 490.0 L640.0 496.2 L647.5 497.5 L653.8 503.8 L662.5 511.2 L668.8 518.1 L677.5 520.6 L686.2 523.1 L693.8 529.4 L700.0 536.2 L707.5 537.5 L715.0 541.9 L725.0 541.9 L732.5 543.8 L745.0 545.0 L760.0 550.0 L762.5 548.5 L770.0 548.5 L772.5 551.2 L767.5 552.5 L762.5 553.8 L763.8 560.0 L765.0 565.0 L777.5 567.5 L795.0 568.8 L802.5 573.8 L812.5 575.0 L825.0 572.5 L840.0 570.0 L855.0 568.0 L870.0 565.5 L887.5 560.0 L890.0 558.8 L902.5 557.5 L920.0 551.2 L940.0 543.2 L955.0 535.0 L972.5 525.0 L990.0 515.0 L1005.0 506.2 L1015.0 500.0 L1021.2 493.8 L1027.5 492.5 L1035.0 495.0 L1045.0 491.2 L1050.0 488.8 L1080.0 494.0 L1110.0 499.0 L1135.0 503.5 L1147.5 506.2 L1155.0 507.5 L1165.0 506.2 L1185.0 505.0" fill="none" stroke="#b4b4b4" stroke-width="0.9" transform="translate(-0.7,1.9)"/>
<path d="M70.0 300.0 L83.8 296.2 L88.8 287.5 L95.0 281.2 L102.5 275.0 L110.0 271.8 L118.8 270.0 L127.5 272.5 L136.2 276.2 L145.0 281.2 L150.0 280.0 L156.2 277.5 L163.8 278.0 L168.2 281.2 L170.0 295.0 L172.5 298.8 L182.5 300.8 L197.5 301.8 L206.2 300.0 L210.0 297.5 L220.0 295.0 L232.5 290.0 L245.0 282.5 L253.8 275.0 L258.0 268.8 L257.5 262.5 L254.5 258.0 L255.0 253.8 L258.8 254.5 L262.5 259.5 L270.0 259.5 L277.5 257.0 L285.0 253.8 L287.5 258.8 L291.2 260.0 L295.0 252.5 L298.8 245.0 L306.2 240.0 L316.2 232.5 L327.5 228.8 L332.5 225.8 L337.5 224.5 L341.2 226.2 L345.0 235.0 L348.8 241.2 L353.2 243.8 L350.0 250.0 L351.2 256.2 L355.0 260.0 L361.2 261.2 L366.2 266.2 L372.5 271.2 L382.5 272.5 L390.0 280.0 L395.0 290.0 L396.2 302.5 L401.2 315.0 L402.3 320.0 L405.5 326.4 L403.7 328.5 L399.6 330.6 L399.0 335.2 L395.5 338.8 L398.2 342.3 L398.2 348.7 L400.8 349.9 L402.0 354.0 L404.0 359.6 L402.3 360.2 L400.2 354.0 L398.4 356.3 L395.5 351.7 L393.8 349.0 L390.2 351.1 L393.2 356.3 L394.9 361.0 L398.2 364.0 L396.4 367.5 L400.2 372.2 L404.3 374.5 L407.8 379.8 L408.8 383.8 L420.0 391.2 L430.0 395.0 L445.0 398.8 L457.5 401.2 L470.0 403.2 L482.5 403.0 L495.0 401.2 L510.0 397.5 L522.5 393.8 L530.0 391.2 L533.8 386.2 L540.0 383.8 L543.8 377.5 L544.5 370.0 L550.0 373.0 L560.0 375.0 L565.0 378.1 L570.0 380.6 L575.0 378.1 L578.8 379.4 L580.0 383.1 L578.1 387.5 L575.0 390.6 L575.6 396.2 L580.0 400.0 L582.5 406.2 L582.5 415.0 L580.6 421.2 L581.2 425.0 L585.6 426.9 L586.9 430.0 L584.4 435.0 L580.0 438.8 L578.5 441.9 L579.4 446.2 L582.5 450.0 L590.0 458.8 L602.5 472.5 L611.2 480.0 L622.5 486.9 L632.5 490.0 L640.0 496.2 L647.5 497.5 L653.8 503.8 L662.5 511.2 L668.8 518.1 L677.5 520.6 L686.2 523.1 L693.8 529.4 L700.0 536.2 L707.5 537.5 L715.0 541.9 L725.0 541.9 L732.5 543.8 L745.0 545.0 L760.0 550.0 L762.5 548.5 L770.0 548.5 L772.5 551.2 L767.5 552.5 L762.5 553.8 L763.8 560.0 L765.0 565.0 L777.5 567.5 L795.0 568.8 L802.5 573.8 L812.5 575.0 L825.0 572.5 L840.0 570.0 L855.0 568.0 L870.0 565.5 L887.5 560.0 L890.0 558.8 L902.5 557.5 L920.0 551.2 L940.0 543.2 L955.0 535.0 L972.5 525.0 L990.0 515.0 L1005.0 506.2 L1015.0 500.0 L1021.2 493.8 L1027.5 492.5 L1035.0 495.0 L1045.0 491.2 L1050.0 488.8 L1080.0 494.0 L1110.0 499.0 L1135.0 503.5 L1147.5 506.2 L1155.0 507.5 L1165.0 506.2 L1185.0 505.0" fill="none" stroke="#3a3d40" stroke-width="1.25" stroke-linejoin="round"/>
</g>
<g stroke="#111" stroke-width="1" fill="none">
<line x1="211.5" y1="35.9" x2="211.5" y2="987.5"/>
<line x1="429.1" y1="35.9" x2="429.1" y2="987.5"/>
<line x1="646.7" y1="35.9" x2="646.7" y2="987.5"/>
<line x1="864.3" y1="35.9" x2="864.3" y2="987.5"/>
<line x1="1081.9" y1="35.9" x2="1081.9" y2="987.5"/>
<line x1="83.4" y1="261.0" x2="1171.5" y2="261.0"/>
<line x1="83.4" y1="536.4" x2="1171.5" y2="536.4"/>
<line x1="83.4" y1="810.9" x2="1171.5" y2="810.9"/>
</g>
<path d="M552.0 441.2 L556.3 454.5 L570.4 454.5 L559.0 462.8 L563.3 476.1 L552.0 467.9 L540.7 476.1 L545.0 462.8 L533.6 454.5 L547.7 454.5 Z" fill="none" stroke="#000" stroke-width="3.70" stroke-linejoin="miter" stroke-miterlimit="10"/>
<g fill="#000" stroke="none">
<rect x="211.5" y="26.1" width="217.6" height="9.8"/>
<rect x="211.5" y="987.5" width="217.6" height="9.5"/>
<rect x="646.7" y="26.1" width="217.6" height="9.8"/>
<rect x="646.7" y="987.5" width="217.6" height="9.5"/>
<rect x="1081.9" y="26.1" width="89.6" height="9.8"/>
<rect x="1081.9" y="987.5" width="89.6" height="9.5"/>
<rect x="73.6" y="261.0" width="9.8" height="275.4"/>
<rect x="1171.5" y="261.0" width="9.5" height="275.4"/>
<rect x="73.6" y="810.9" width="9.8" height="176.6"/>
<rect x="1171.5" y="810.9" width="9.5" height="176.6"/>
</g>
<g fill="none" stroke="#000" stroke-width="1.1">
<rect x="73.6" y="26.1" width="1107.4" height="970.9"/>
<rect x="83.4" y="35.9" width="1088.1" height="951.6"/>
<path d="M83.4 26.1V35.9 M1171.5 26.1V35.9 M83.4 987.5V997.0 M1171.5 987.5V997.0"/>
<path d="M73.6 35.9H83.4 M1171.5 35.9H1181.0 M73.6 987.5H83.4 M1171.5 987.5H1181.0"/>
</g>
<g class="t" font-size="23.60" fill="#000">
<text x="211.9" y="16.4" text-anchor="middle">13°12'</text>
<text x="211.9" y="1024.6" text-anchor="middle">13°12'</text>
<text x="429.6" y="16.4" text-anchor="middle">13°24'</text>
<text x="429.6" y="1024.6" text-anchor="middle">13°24'</text>
<text x="647.2" y="16.4" text-anchor="middle">13°36'</text>
<text x="647.2" y="1024.6" text-anchor="middle">13°36'</text>
<text x="864.8" y="16.4" text-anchor="middle">13°48'</text>
<text x="864.8" y="1024.6" text-anchor="middle">13°48'</text>
<text x="1082.4" y="16.4" text-anchor="middle">14°00'</text>
<text x="1082.4" y="1024.6" text-anchor="middle">14°00'</text>
<text x="64.2" y="269.7" text-anchor="end">38°12'</text>
<text x="1189.9" y="269.7" text-anchor="start">38°12'</text>
<text x="64.2" y="545.1" text-anchor="end">38°00'</text>
<text x="1189.9" y="545.1" text-anchor="start">38°00'</text>
<text x="64.2" y="819.6" text-anchor="end">37°48'</text>
<text x="1189.9" y="819.6" text-anchor="start">37°48'</text>
</g>
<!-- info box -->
<g id="infobox">
<rect x="535.6" y="46.4" width="618.0" height="62.0" fill="#fff" stroke="#000" stroke-width="1"/>
<g class="t" font-size="12.2" fill="#000">
<text x="540.7" y="59.9" textLength="358.8" lengthAdjust="spacingAndGlyphs">Terremoto del 23-01-2026 00:34:07 (ora locale) ML=2.7 Prof=7 km</text>
<text x="540.7" y="74.7">Paura</text>
<text x="540.7" y="89.5" textLength="611.6" lengthAdjust="spacingAndGlyphs">Dati non verificati estratti da 123 questionari compilati tramite Internet, relativi a comuni con almeno 3 questionari.</text>
<text x="540.7" y="104.3" textLength="236.4" lengthAdjust="spacingAndGlyphs">Aggiornato il: 30-01-2026 12:38 (ora locale)</text>
</g>
</g>
<!-- legend -->
<g id="legend">
<rect x="1051.4" y="170.9" width="101.1" height="333.5" fill="#fff" stroke="#000" stroke-width="1"/>
<g class="d" font-size="11.4" fill="#000" text-anchor="middle">
<text x="1102" y="183.7" textLength="85.5" lengthAdjust="spacingAndGlyphs">Percentuale</text>
<text x="1100" y="199.9" textLength="74.6" lengthAdjust="spacingAndGlyphs">di persone</text>
<text x="1102" y="216.1" textLength="72.6" lengthAdjust="spacingAndGlyphs">che hanno</text>
<text x="1102" y="232.3" textLength="54.5" lengthAdjust="spacingAndGlyphs">provato</text>
<text x="1100" y="248.5" textLength="40.4" lengthAdjust="spacingAndGlyphs">paura</text>
</g>
<rect x="1062" y="255" width="80" height="36.9" fill="#fae0fc"/>
<rect x="1062" y="298.9" width="80" height="36.9" fill="#e4ccfc"/>
<rect x="1062" y="344.1" width="80" height="36.9" fill="#bb70ff"/>
<rect x="1062" y="386.3" width="80" height="37.8" fill="#7f00ff"/>
<g class="d" font-size="11.4" fill="#000" text-anchor="middle">
<text x="1102" y="277.7" textLength="52.9" lengthAdjust="spacingAndGlyphs">0 - 24%</text>
<text x="1102" y="321.7" textLength="60.7" lengthAdjust="spacingAndGlyphs">25 - 49%</text>
<text x="1102" y="366.7" textLength="60.7" lengthAdjust="spacingAndGlyphs">50 - 74%</text>
<text x="1102" y="409.3" fill="#fff" textLength="70.5" lengthAdjust="spacingAndGlyphs">75 - 100%</text>
<text x="1101.5" y="449.2" textLength="67.5" lengthAdjust="spacingAndGlyphs">Epicentro</text>
<text x="1101.5" y="464.5" textLength="87.6" lengthAdjust="spacingAndGlyphs">strumentale</text>
</g>
<line x1="1051.4" y1="432.3" x2="1152.5" y2="432.3" stroke="#000" stroke-width="1" stroke-dasharray="2.6 2.6"/>
<path d="M1099.8 477.5 L1101.9 483.9 L1108.6 483.9 L1103.2 487.9 L1105.2 494.3 L1099.8 490.4 L1094.4 494.3 L1096.4 487.9 L1091.0 483.9 L1097.7 483.9 Z" fill="#fff" stroke="#000" stroke-width="1"/>
</g>
<!-- scale bar -->
<g id="scalebar">
<rect x="183.3" y="928.9" width="126.1" height="6.7" fill="#000"/>
<rect x="209.6" y="930.8" width="24" height="3.2" fill="#fff"/>
<rect x="259.6" y="930.8" width="24" height="3.2" fill="#fff"/>
<path d="M183.9 935V939.6M308.8 935V939.6M209.1 935V937.3M234.1 935V937.3M259.1 935V937.3M284.1 935V937.3" stroke="#000" stroke-width="1.2" fill="none"/>
<g class="t" fill="#000">
<text x="246.1" y="914.6" font-size="30.6" text-anchor="middle">km</text>
<text x="184.2" y="963.5" font-size="23.6" text-anchor="middle">0</text>
<text x="308.2" y="963.5" font-size="23.6" text-anchor="middle">10</text>
</g>
</g>

<!-- INGV logo -->
<g id="ingv">
<defs><clipPath id="gclip"><circle cx="132" cy="78" r="30"/></clipPath>
<radialGradient id="gshade" cx="0.36" cy="0.28" r="0.8"><stop offset="0" stop-color="#8fe0ff" stop-opacity="0.3"/><stop offset="0.5" stop-color="#fff" stop-opacity="0"/><stop offset="1" stop-color="#00243a" stop-opacity="0.42"/></radialGradient></defs>
<g clip-path="url(#gclip)">
<circle cx="132" cy="78" r="30" fill="#1584b2"/>
<path d="M134.99 61.60 L137.84 55.95 L141.82 49.98 L145.81 51.30 L149.46 55.62 L143.15 58.14 Z" fill="#2f9e3a"/>
<path d="M134.99 61.60 L143.15 58.28 L149.46 55.95 L151.12 57.28 L151.45 61.26 L150.99 65.12 L144.48 62.46 Z" fill="#e30d2b"/>
<path d="M149.79 55.29 L154.44 58.28 L158.42 63.92 L160.75 70.56 L159.09 73.22 L155.10 69.56 L151.12 66.24 L151.45 61.26 L151.12 57.28 Z" fill="#d6c6da"/>
<path d="M134.99 61.60 L144.48 62.59 L150.92 66.24 L148.46 69.56 L145.41 72.02 L141.16 66.05 Z" fill="#2f9e3a"/>
<path d="M134.99 61.60 L141.16 66.05 L145.41 72.22 L140.50 74.01 L134.65 74.68 L134.85 63.92 Z" fill="#f5e31a"/>
<path d="M150.92 66.38 L155.10 69.56 L159.09 73.35 L156.43 78.86 L150.99 84.37 L148.46 78.53 L145.54 72.22 L148.46 69.56 Z" fill="#f5e31a"/>
<path d="M134.59 74.94 L140.50 74.21 L145.41 72.55 L148.46 78.86 L150.79 84.64 L144.48 87.96 L133.99 89.82 Z" fill="#e30d2b"/>
<path d="M133.92 90.08 L144.48 88.22 L150.86 85.04 L152.45 90.81 L154.11 96.79 L155.10 99.78 L151.12 103.76 L144.48 106.42 L137.84 108.08 L131.86 108.74 L132.53 103.76 Z" fill="#1f9a3c"/>
<path d="M151.12 84.64 L156.43 79.06 L159.42 74.88 L162.74 75.87 L163.07 81.18 L161.08 87.82 L158.09 93.14 L154.44 96.46 L152.58 90.81 Z" fill="#d6c6da"/>
<path d="M159.42 73.22 L161.08 70.56 L163.41 73.88 L163.41 76.54 L160.75 76.67 Z" fill="#2f9e3a"/>
<path d="M154.44 96.79 L158.09 93.27 L159.09 94.46 L155.77 98.45 Z" fill="#e30d2b"/>
<circle cx="132" cy="78" r="30" fill="url(#gshade)"/>
<g fill="none" stroke="#fff" stroke-width="0.7" stroke-opacity="0.95" stroke-linecap="round">
<path d="M134.99 61.60 C134.35 60.43 132.50 56.67 131.20 54.62 C129.91 52.58 127.88 50.20 127.22 49.31"/>
<path d="M134.99 61.60 C135.46 60.66 136.68 57.89 137.84 55.95 C139.00 54.02 141.27 50.97 141.96 49.98"/>
<path d="M134.99 61.60 C134.13 61.76 132.38 62.28 129.87 62.59 C127.36 62.90 123.40 62.24 119.91 63.46 C116.43 64.67 111.94 67.55 108.96 69.90 C105.97 72.24 103.15 76.26 101.98 77.53"/>
<path d="M134.99 61.60 C134.02 62.43 130.95 64.97 129.21 66.58 C127.47 68.18 126.00 69.34 124.56 71.22 C123.12 73.11 121.74 75.76 120.58 77.86 C119.41 79.97 118.58 81.52 117.59 83.84 C116.59 86.16 115.49 89.26 114.60 91.81 C113.71 94.35 112.83 97.45 112.28 99.11 C111.72 100.77 111.45 101.33 111.28 101.77"/>
<path d="M134.99 61.60 C134.91 63.75 134.70 69.84 134.52 74.54 C134.34 79.25 134.23 84.95 133.92 89.82 C133.61 94.69 133.03 100.61 132.66 103.76 C132.30 106.92 131.89 107.91 131.73 108.74"/>
<path d="M134.99 61.60 C136.01 62.34 139.41 64.27 141.16 66.05 C142.91 67.82 144.26 70.12 145.48 72.22 C146.69 74.32 147.56 76.59 148.46 78.66 C149.37 80.73 150.24 82.61 150.92 84.64 C151.61 86.66 152.02 88.79 152.58 90.81 C153.15 92.84 153.83 95.18 154.31 96.79 C154.78 98.39 155.25 99.83 155.44 100.44"/>
<path d="M134.99 61.60 C136.57 61.76 141.81 61.81 144.48 62.59 C147.15 63.38 149.22 65.15 150.99 66.31 C152.76 67.47 153.73 68.39 155.10 69.56 C156.48 70.74 157.95 72.08 159.22 73.35 C160.49 74.62 162.15 76.56 162.74 77.20"/>
<path d="M134.99 61.60 C136.35 61.03 140.74 59.15 143.15 58.21 C145.57 57.27 147.80 56.49 149.46 55.95 C151.12 55.41 152.50 55.12 153.11 54.96"/>
<path d="M127.75 49.64 C127.00 50.20 124.48 51.82 123.23 52.96 C121.98 54.10 120.96 55.32 120.24 56.48 C119.53 57.65 119.03 58.72 118.92 59.94 C118.81 61.15 118.64 61.91 119.58 63.79 C120.52 65.67 122.85 69.52 124.56 71.22 C126.28 72.93 128.19 73.43 129.87 74.01 C131.55 74.60 132.88 74.73 134.65 74.74 C136.42 74.75 138.70 74.48 140.50 74.08 C142.29 73.68 144.08 73.11 145.41 72.35 C146.74 71.60 147.55 70.57 148.46 69.56 C149.38 68.56 150.41 67.69 150.92 66.31 C151.43 64.93 151.51 62.82 151.52 61.26 C151.53 59.70 151.08 57.67 150.99 56.95"/>
<path d="M114.60 53.30 C113.88 54.02 111.30 56.28 110.28 57.61 C109.27 58.94 108.88 59.88 108.49 61.26 C108.10 62.65 107.90 64.31 107.96 65.91 C108.02 67.52 108.10 68.90 108.82 70.89 C109.54 72.88 110.82 75.71 112.28 77.86 C113.74 80.02 115.32 82.07 117.59 83.84 C119.86 85.61 123.17 87.47 125.89 88.49 C128.61 89.51 130.82 90.02 133.92 89.95 C137.02 89.88 141.65 88.95 144.48 88.09 C147.31 87.23 148.93 86.30 150.92 84.77 C152.91 83.24 155.02 80.83 156.43 78.93 C157.85 77.02 158.65 74.80 159.42 73.35 C160.20 71.90 160.80 70.75 161.08 70.23"/>
<path d="M101.98 77.53 C102.15 78.42 102.21 80.47 102.98 82.84 C103.75 85.22 105.08 89.10 106.63 91.81 C108.18 94.52 109.84 97.34 112.28 99.11 C114.71 100.88 117.84 101.64 121.24 102.43 C124.64 103.23 128.79 104.05 132.66 103.89 C136.53 103.74 140.91 102.69 144.48 101.50 C148.06 100.32 151.84 98.18 154.11 96.79 C156.38 95.39 157.43 93.75 158.09 93.14"/>
<path d="M120.24 56.48 C119.30 56.62 116.54 56.51 114.60 57.28 C112.66 58.05 109.62 60.49 108.62 61.13"/>
<path d="M102.52 83.84 C102.98 84.84 103.84 87.71 105.30 89.82 C106.76 91.92 110.28 95.35 111.28 96.46"/>
</g></g>
<g font-family="'Liberation Sans',sans-serif" font-weight="bold" font-size="13.2" fill="#4a4a4a">
<text x="170.1" y="74.2" textLength="89" lengthAdjust="spacingAndGlyphs">ISTITUTO NAZIONALE</text>
<text x="170.1" y="89.0" textLength="135.2" lengthAdjust="spacingAndGlyphs">DI GEOFISICA E VULCANOLOGIA</text>
</g></g>
<!-- hai sentito il terremoto logo -->
<g id="hsit" opacity="0.95">
<defs><path id="tcirc" d="M1137.10 916.20 A43.20 43.20 0 1 1 1050.70 916.20 A43.20 43.20 0 1 1 1137.10 916.20"/></defs>
<circle cx="1093.9" cy="916.2" r="33" fill="#141414"/>
<circle cx="1093.9" cy="916.2" r="17.9" fill="none" stroke="#e2001a" stroke-width="6.4"/>
<path d="M1098.8 909.9 L1126.6 900.4 Q1130.2 899.6 1130.2 903 L1130.2 930.6 Q1130.2 934.6 1126.6 933.4 L1098.2 922.6 Z" fill="url(#cone)"/>
<path d="M1098.2 922.6 L1126.6 933.4 Q1130.2 934.6 1130.2 930.6 L1130.2 927.5 Q1129 930.5 1126 929.6 L1100 919.5 Z" fill="#0a58a3"/>
<circle cx="1094.9" cy="916.0" r="7.9" fill="#e2001a"/>
<circle cx="1143.5" cy="916.5" r="9.7" fill="#e2001a"/>
<text x="0" y="0" transform="translate(1138.2 916.5) rotate(90)" text-anchor="middle" font-family="'Liberation Sans',sans-serif" font-weight="bold" font-size="15" fill="#fff">?</text>
<text font-family="'Liberation Sans',sans-serif" font-size="19.5" font-weight="normal" fill="#e2001a" stroke="#e2001a" stroke-width="0.40"><textPath href="#tcirc" startOffset="18.85" textLength="43.73" lengthAdjust="spacingAndGlyphs">www.</textPath></text>
<text font-family="'DejaVu Sans','Liberation Sans',sans-serif" font-size="17.0" font-weight="200" fill="#111" stroke="#111" stroke-width="0.30"><textPath href="#tcirc" startOffset="64.84" textLength="21.87" lengthAdjust="spacingAndGlyphs">hai/</textPath></text>
<text font-family="'Liberation Sans',sans-serif" font-size="20.0" font-weight="normal" fill="#111" stroke="#111" stroke-width="0.45"><textPath href="#tcirc" startOffset="87.84" textLength="55.04" lengthAdjust="spacingAndGlyphs">sentito</textPath></text>
<text font-family="'DejaVu Sans','Liberation Sans',sans-serif" font-size="17.0" font-weight="200" fill="#111" stroke="#111" stroke-width="0.30"><textPath href="#tcirc" startOffset="144.39" textLength="9.05" lengthAdjust="spacingAndGlyphs">il/</textPath></text>
<text font-family="'Liberation Sans',sans-serif" font-size="20.0" font-weight="normal" fill="#111" stroke="#111" stroke-width="0.45"><textPath href="#tcirc" startOffset="154.19" textLength="82.94" lengthAdjust="spacingAndGlyphs">terremoto</textPath></text>
<text font-family="'Liberation Sans',sans-serif" font-size="18.5" font-weight="bold" fill="#e2001a"><textPath href="#tcirc" startOffset="237.88" textLength="18.47" lengthAdjust="spacingAndGlyphs">.it</textPath></text>
</g>
</svg></body></html>
